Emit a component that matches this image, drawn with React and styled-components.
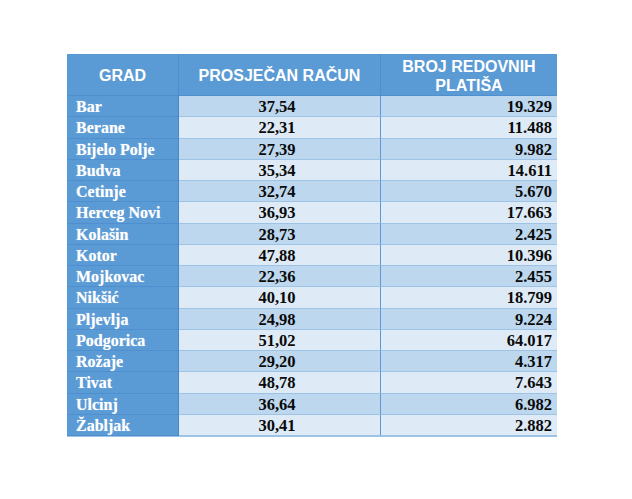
import React from "react";
import styled, { createGlobalStyle } from "styled-components";

const GlobalStyle = createGlobalStyle`
  html, body { margin: 0; padding: 0; background: #ffffff; }
  * { box-sizing: border-box; }
`;

const Page = styled.div`
  width: 632px;
  height: 499px;
  padding: 54px 0 0 67px;
  background: #ffffff;
`;

const Table = styled.div`
  display: grid;
  grid-template-columns: 112px 202px 176px;
  grid-template-rows: 42px repeat(16, 21.25px);
  width: 490px;
  border-bottom: 1px solid #9dc3e6;
`;

const HeadCell = styled.div`
  background: #5b9bd5;
  color: #ffffff;
  font-family: "Liberation Sans", Arial, sans-serif;
  font-weight: bold;
  font-size: 16px;
  line-height: 19px;
  display: flex;
  align-items: center;
  justify-content: center;
  text-align: center;
  padding-top: 2px;
  border-right: ${(p) => (p.$last ? "none" : "1px solid #4f8fcf")};
  border-bottom: 1px solid #4f8fcf;
`;

const CityCell = styled.div`
  background: #5b9bd5;
  color: #ffffff;
  font-family: "Liberation Serif", "Times New Roman", serif;
  font-weight: bold;
  font-size: 16px;
  display: flex;
  align-items: center;
  padding: 2px 0 0 9px;
  border-right: 1px solid #4a86c5;
  border-bottom: 1px solid #4f8fcf;
  text-shadow: 0 0 1px rgba(255, 255, 255, 0.5);
`;

const ValueCell = styled.div`
  background: ${(p) => (p.$odd ? "#bdd7ee" : "#deebf7")};
  color: #0a0a0a;
  font-family: "Liberation Serif", "Times New Roman", serif;
  font-weight: bold;
  font-size: 16.5px;
  display: flex;
  align-items: center;
  justify-content: ${(p) => (p.$align === "right" ? "flex-end" : "center")};
  padding: 2px 5px 0 0;
  border-right: ${(p) => (p.$divider ? "1px solid #5b9bd5" : "none")};
  border-bottom: 1px solid #9dc3e6;
`;

const rows = [
  ["Bar", "37,54", "19.329"],
  ["Berane", "22,31", "11.488"],
  ["Bijelo Polje", "27,39", "9.982"],
  ["Budva", "35,34", "14.611"],
  ["Cetinje", "32,74", "5.670"],
  ["Herceg Novi", "36,93", "17.663"],
  ["Kolašin", "28,73", "2.425"],
  ["Kotor", "47,88", "10.396"],
  ["Mojkovac", "22,36", "2.455"],
  ["Nikšić", "40,10", "18.799"],
  ["Pljevlja", "24,98", "9.224"],
  ["Podgorica", "51,02", "64.017"],
  ["Rožaje", "29,20", "4.317"],
  ["Tivat", "48,78", "7.643"],
  ["Ulcinj", "36,64", "6.982"],
  ["Žabljak", "30,41", "2.882"],
];

export default function App() {
  return (
    <Page>
      <GlobalStyle />
      <Table>
        <HeadCell>GRAD</HeadCell>
        <HeadCell>PROSJEČAN RAČUN</HeadCell>
        <HeadCell $last>
          BROJ REDOVNIH
          <br />
          PLATIŠA
        </HeadCell>
        {rows.map(([city, avg, count], i) => (
          <React.Fragment key={city}>
            <CityCell>{city}</CityCell>
            <ValueCell $odd={i % 2 === 0} $divider>
              {avg}
            </ValueCell>
            <ValueCell $odd={i % 2 === 0} $align="right">
              {count}
            </ValueCell>
          </React.Fragment>
        ))}
      </Table>
    </Page>
  );
}
